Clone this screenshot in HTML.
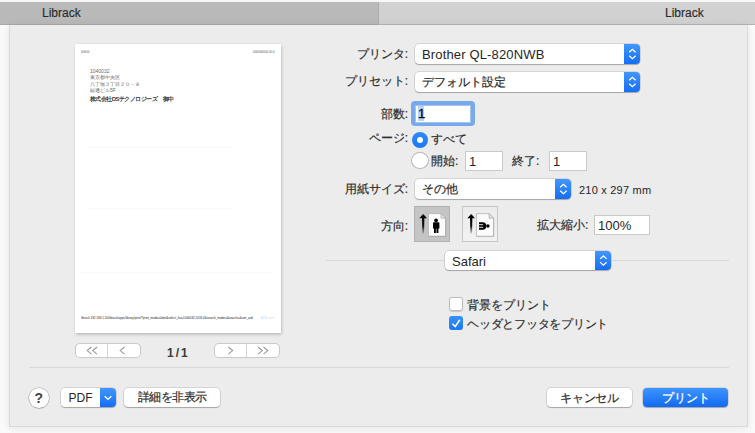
<!DOCTYPE html>
<html><head><meta charset="utf-8">
<style>
*{box-sizing:border-box;margin:0;padding:0}
html,body{width:755px;height:433px;overflow:hidden;background:#fafafa;font-family:"Liberation Sans",sans-serif;color:#262626}
.a{position:absolute}
#top{left:0;top:0;width:755px;height:2px;background:#f7f7f7}
#tb1{left:0;top:2px;width:378px;height:23px;background:#b9b9b9;border-bottom:1px solid #a8a8a8}
#tb2{left:378px;top:2px;width:377px;height:23px;background:#d1d1d1;border-bottom:1px solid #b4b4b4;border-left:1px solid #acacac}
.tt{font-size:12px;color:#2a2a2a;top:6px;-webkit-text-stroke:.15px #2a2a2a}
#dlg{left:9px;top:25px;width:739px;height:402px;background:#ececec;border-left:1px solid #d9d9d9;border-right:1px solid #d9d9d9;border-bottom:1px solid #d9d9d9;box-shadow:0 1px 8px rgba(0,0,0,.09)}
.j{font-size:12px;white-space:nowrap;color:#2e2e2e;-webkit-text-stroke:.2px #2e2e2e}
.lbl{text-align:right;left:300px;width:108px}
.pop{background:#fff;border-radius:4px;box-shadow:0 0 0 .5px rgba(0,0,0,.2),0 1px 1px rgba(0,0,0,.22)}
.bl{position:absolute;right:0;top:0;bottom:0;width:16.5px;border-radius:0 4px 4px 0;background:linear-gradient(#4197fd,#166df6)}
.bl svg{position:absolute;left:0;top:0}
.pop .tx{position:absolute;left:7px;top:3px;font-size:13px;white-space:nowrap;color:#262626}
.fld{background:#fff;box-shadow:inset 0 0 0 1px #c9c9c9,inset 0 1px 0 #b9b9b9}
.fld .tx{position:absolute;left:4px;top:3px;font-size:13px;color:#262626}
.btn{background:#fff;border-radius:4px;box-shadow:0 0 0 .5px rgba(0,0,0,.2),0 1px 1px rgba(0,0,0,.22);text-align:center}
.sep{height:1px;background:#d8d8d8}
.pt{font-size:5px;white-space:nowrap;color:#6a6a6a;line-height:6px}
</style></head><body>
<div class="a" id="top"></div>
<div class="a" id="tb1"></div>
<div class="a" id="tb2"></div>
<div class="a tt" style="left:42px">Librack</div>
<div class="a tt" style="left:665px">Librack</div>
<div class="a" id="dlg"></div>

<!-- preview page -->
<div class="a" style="left:75px;top:44px;width:206px;height:289px;background:#fff;box-shadow:0.5px 1.5px 3.5px rgba(0,0,0,.25),0 0 1px rgba(0,0,0,.1)">
  <div class="a pt" style="left:6px;top:5px;font-size:3px;color:#555">00000</div>
  <div class="a pt" style="left:178px;top:5px;font-size:3px;color:#555">000000000 00:0</div>
  <div class="a pt" style="left:15px;top:24px">1040032</div>
  <div class="a pt" style="left:15px;top:30px">東京都中央区</div>
  <div class="a pt" style="left:15px;top:37px">八丁堀２丁目２０－８</div>
  <div class="a pt" style="left:15px;top:43px">綜通ビル5F</div>
  <div class="a pt" style="left:15px;top:52px;font-weight:bold;color:#3a3a3a;font-size:6px;letter-spacing:-.55px">株式会社DSテクノロジーズ　御中</div>
  <div class="a" style="left:6px;top:272px;width:172px;height:4px;overflow:hidden;font-size:3px;line-height:4px;white-space:nowrap;color:#222">librack 192.168.1.10/librack/apps/library/print/?print_mode=label&amp;select_list=1040032,2018,4&amp;search_mode=&amp;search=&amp;sort_order=asc&amp;page=1&amp;display=20&amp;id=0000</div>
  <div class="a" style="left:186px;top:272px;width:13px;height:4px;overflow:hidden;font-size:3px;line-height:4px;white-space:nowrap;color:#999">1 / 1 ページ</div>
  <div class="a" style="left:12px;top:103px;width:147px;height:1px;background:#f9f9f9"></div>
  <div class="a" style="left:12px;top:164px;width:147px;height:1px;background:#f9f9f9"></div>
  <div class="a" style="left:6px;top:228px;width:193px;height:1px;background:#f9f9f9"></div>
</div>

<!-- nav buttons -->
<div class="a" style="left:76px;top:344px;width:64px;height:13px;border-radius:4px;background:#fff;box-shadow:0 0 0 1px #cacaca">
  <div class="a" style="left:31px;top:0;width:1px;height:13px;background:#d4d4d4"></div>
  <svg class="a" style="left:0;top:0" width="64" height="13"><path d="M15.5 3 L11.2 6.6 L15.5 10.2 M21 3 L16.7 6.6 L21 10.2 M48.5 3 L44.2 6.6 L48.5 10.2" fill="none" stroke="#9a9a9a" stroke-width="1.1"/></svg>
</div>
<div class="a" style="left:215px;top:344px;width:64px;height:13px;border-radius:4px;background:#fff;box-shadow:0 0 0 1px #cacaca">
  <div class="a" style="left:31px;top:0;width:1px;height:13px;background:#d4d4d4"></div>
  <svg class="a" style="left:0;top:0" width="64" height="13"><path d="M13.3 3 L17.6 6.6 L13.3 10.2 M43 3 L47.3 6.6 L43 10.2 M48.5 3 L52.8 6.6 L48.5 10.2" fill="none" stroke="#9a9a9a" stroke-width="1.1"/></svg>
</div>
<div class="a" style="left:167px;top:346px;font-size:12px;font-weight:bold;color:#3a3a3a;word-spacing:-1.3px">1 / 1</div>

<!-- labels -->
<div class="a j lbl" style="top:46px">プリンタ:</div>
<div class="a j lbl" style="top:73px">プリセット:</div>
<div class="a j lbl" style="top:106px">部数:</div>
<div class="a j lbl" style="top:130px">ページ:</div>
<div class="a j lbl" style="top:181px">用紙サイズ:</div>
<div class="a j lbl" style="top:218px">方向:</div>

<div class="a pop" style="left:415px;top:44px;width:225px;height:20px"><div class="tx" style="letter-spacing:.15px">Brother QL-820NWB</div><div class="bl"><svg width="17" height="20"><path d="M5.2 8.3 L8.4 5.3 L11.6 8.3 M5.2 11.7 L8.4 14.7 L11.6 11.7" fill="none" stroke="#fff" stroke-width="1.3"/></svg></div></div>
<div class="a pop" style="left:415px;top:72px;width:225px;height:20px"><div class="tx j" style="top:2px;font-size:12px">デフォルト設定</div><div class="bl"><svg width="17" height="20"><path d="M5.2 8.3 L8.4 5.3 L11.6 8.3 M5.2 11.7 L8.4 14.7 L11.6 11.7" fill="none" stroke="#fff" stroke-width="1.3"/></svg></div></div>

<!-- copies -->
<div class="a" style="left:411px;top:101px;width:64px;height:25px;border-radius:4px;background:#78a9ec"></div>
<div class="a fld" style="left:415px;top:105px;width:56px;height:18px;box-shadow:inset 0 0 0 1px #a6c4ea"></div>
<div class="a" style="left:418px;top:106px;width:6px;height:15px;background:#b4d5fe"></div>
<div class="a" style="left:418px;top:106px;font-size:13px;color:#000;-webkit-text-stroke:.3px #000">1</div>

<!-- pages -->
<div class="a" style="left:412px;top:132px;width:16px;height:16px;border-radius:50%;background:linear-gradient(#2f8bfa,#1b78f4)"></div>
<div class="a" style="left:417px;top:137px;width:6px;height:6px;border-radius:50%;background:#fff"></div>
<div class="a j" style="left:431px;top:131px">すべて</div>
<div class="a" style="left:412px;top:153px;width:16px;height:15px;border-radius:50%;background:#fff;box-shadow:0 0 0 1px #b9b9b9,0 .5px 1px rgba(0,0,0,.25)"></div>
<div class="a j" style="left:431px;top:153px">開始:</div>
<div class="a fld" style="left:465px;top:151px;width:38px;height:20px"><div class="tx">1</div></div>
<div class="a j" style="left:512px;top:153px">終了:</div>
<div class="a fld" style="left:549px;top:151px;width:38px;height:20px"><div class="tx">1</div></div>

<!-- paper size -->
<div class="a pop" style="left:415px;top:179px;width:156px;height:20px"><div class="tx j" style="top:2px;font-size:12px">その他</div><div class="bl"><svg width="17" height="20"><path d="M5.2 8.3 L8.4 5.3 L11.6 8.3 M5.2 11.7 L8.4 14.7 L11.6 11.7" fill="none" stroke="#fff" stroke-width="1.3"/></svg></div></div>
<div class="a" style="left:579px;top:184px;font-size:11px;color:#262626;letter-spacing:.22px">210 x 297 mm</div>

<!-- orientation -->
<div class="a" style="left:414px;top:206px;width:36px;height:36px;background:#c5c5c5;box-shadow:inset 0 0 0 1px #b0b0b0"></div>
<div class="a" style="left:462px;top:206px;width:36px;height:36px;background:linear-gradient(#ebebeb,#f2f2f2);box-shadow:inset 0 0 0 1px #c6c6c6"></div>
<svg class="a" style="left:414px;top:206px" width="36" height="36">
  <defs><linearGradient id="ar" x1="0" y1="0" x2="0" y2="1"><stop offset="0" stop-color="#000"/><stop offset=".5" stop-color="#111"/><stop offset="1" stop-color="#000" stop-opacity="0"/></linearGradient>
  <g id="pg"><path d="M5.4 12.3 L9.2 8.1 L13 12.3 Z" fill="#000"/><path d="M8 11.5 H10.4 L10 28.5 H8.4 Z" fill="url(#ar)"/>
  <path d="M14.4 7.6 H27 L31.6 12.2 V30.2 H14.4 Z" fill="#fbfbfb" stroke="#a9a9a9" stroke-width=".7"/>
  <path d="M14.8 30.6 H31.8 V12.6" fill="none" stroke="rgba(0,0,0,.12)" stroke-width=".8"/>
  <path d="M27 7.6 V12.2 H31.6 Z" fill="#e6e6e6" stroke="#a9a9a9" stroke-width=".7"/></g>
  <g id="man"><circle cx="22.1" cy="14.3" r="1.9" fill="#000"/>
  <path d="M19 16.9 Q19 16.3 19.6 16.3 H24.8 Q25.4 16.3 25.4 16.9 V22.4 H24.4 V26.9 H22.5 V22.8 H21.9 V26.9 H20 V22.4 H19 Z" fill="#000"/></g></defs>
  <use href="#pg"/><use href="#man"/>
</svg>
<svg class="a" style="left:462px;top:206px" width="36" height="36">
  <use href="#pg"/><path d="M17 16.3 H20.6 A3.7 3.7 0 0 1 20.6 23.7 H17 Z" fill="#000"/><path d="M16.8 18.7 H21.2 M16.8 21.3 H21.2" stroke="#fbfbfb" stroke-width=".9"/><circle cx="25.9" cy="20" r="1.7" fill="#000"/>
</svg>
<div class="a j" style="left:537px;top:217px">拡大縮小:</div>
<div class="a fld" style="left:594px;top:215px;width:56px;height:20px"><div class="tx">100%</div></div>

<!-- safari -->
<div class="a sep" style="left:326px;top:260px;width:403px"></div>
<div class="a pop" style="left:445px;top:251px;width:166px;height:19px"><div class="tx">Safari</div><div class="bl"><svg width="17" height="19"><path d="M5.2 7.9 L8.4 4.9 L11.6 7.9 M5.2 11.2 L8.4 14.2 L11.6 11.2" fill="none" stroke="#fff" stroke-width="1.3"/></svg></div></div>

<!-- checkboxes -->
<div class="a" style="left:449px;top:297px;width:14px;height:14px;border-radius:3px;background:#fff;box-shadow:inset 0 0 0 1px #bdbdbd,0 .5px 1px rgba(0,0,0,.15)"></div>
<div class="a j" style="left:467px;top:297px">背景をプリント</div>
<div class="a" style="left:449px;top:316px;width:14px;height:14px;border-radius:3px;background:linear-gradient(#3792fb,#1b78f4)"></div>
<svg class="a" style="left:449px;top:316px" width="14" height="14"><path d="M3.4 7.8 L6.2 10.6 L10.8 3.8" fill="none" stroke="#fff" stroke-width="1.6"/></svg>
<div class="a j" style="left:467px;top:316px;letter-spacing:-.25px">ヘッダとフッタをプリント</div>

<div class="a sep" style="left:29px;top:367px;width:700px"></div>

<!-- bottom buttons -->
<div class="a" style="left:29px;top:388px;width:19.5px;height:19.5px;border-radius:50%;background:#fff;box-shadow:0 0 0 .6px rgba(0,0,0,.28),0 .5px 1px rgba(0,0,0,.2);font-size:14px;font-weight:bold;text-align:center;line-height:20px;color:#444">?</div>
<div class="a btn" style="left:61px;top:388px;width:55px;height:19px"><div class="a" style="left:0;top:3px;width:39px;font-size:12px;text-align:center">PDF</div><div class="bl" style="width:16px"><svg width="16" height="19"><path d="M4.7 8.3 L8 11.3 L11.3 8.3" fill="none" stroke="#fff" stroke-width="1.4"/></svg></div></div>
<div class="a btn j" style="left:124px;top:388px;width:96px;height:19px;line-height:19px;letter-spacing:-.5px">詳細を非表示</div>
<div class="a btn j" style="left:547px;top:388px;width:85px;height:19px;line-height:20px;letter-spacing:-.3px">キャンセル</div>
<div class="a btn j" style="left:643px;top:388px;width:85px;height:19px;line-height:20px;background:linear-gradient(#3f95fd,#106af5);color:#fff;-webkit-text-stroke:.3px #fff">プリント</div>
</body></html>
